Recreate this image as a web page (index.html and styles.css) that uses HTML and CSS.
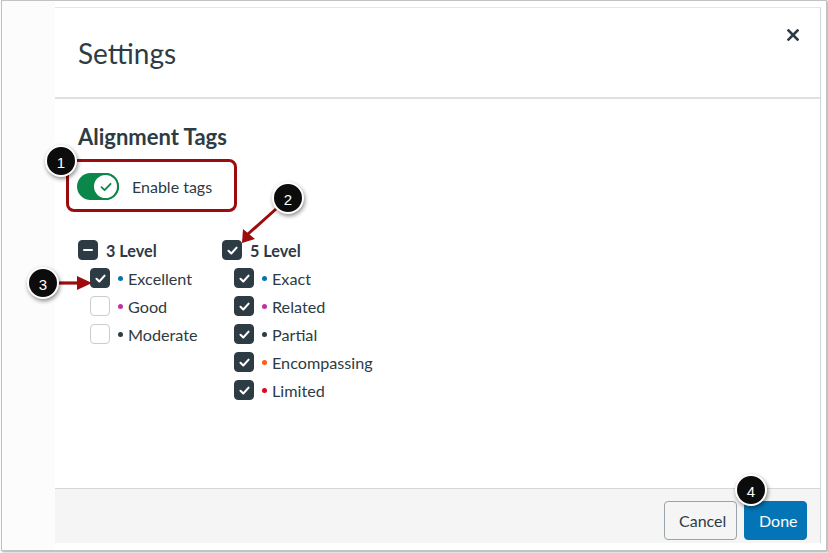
FILE: index.html
```html
<!DOCTYPE html>
<html lang="en">
<head>
<meta charset="utf-8">
<title>Settings</title>
<link rel="stylesheet" href="styles.css">
</head>
<body>
<div class="frame">
  <div class="strip"></div>
  <div class="modal">
    <header class="modal-header">
      <h1 class="title">Settings</h1>
      <button class="close" aria-label="Close">
        <svg width="12" height="12" viewBox="0 0 12 12"><path d="M1.5 1.5 L10.5 10.5 M10.5 1.5 L1.5 10.5" stroke="#2d3b45" stroke-width="2.6" stroke-linecap="square"/></svg>
      </button>
    </header>
    <section class="modal-body">
      <h2 class="section-title">Alignment Tags</h2>
      <div class="toggle-box">
        <span class="toggle">
          <span class="knob">
            <svg width="14" height="14" viewBox="0 0 14 14"><path d="M2.5 7.2 L5.6 10.2 L11.6 3.8" fill="none" stroke="#0b874b" stroke-width="1.8" stroke-linecap="round" stroke-linejoin="round"/></svg>
          </span>
        </span>
        <span class="toggle-label">Enable tags</span>
      </div>
      <div class="groups">
        <div class="group">
          <div class="row">
            <span class="cb on"><span class="minus"></span></span>
            <span class="group-label">3 Level</span>
          </div>
          <div class="children">
            <div class="row"><span class="cb on"><svg class="tick" viewBox="0 0 12 12"><path d="M2.3 6.3 L4.9 8.8 L9.8 3.4"/></svg></span><span class="dot blue"></span><span class="item">Excellent</span></div>
            <div class="row"><span class="cb"></span><span class="dot magenta"></span><span class="item">Good</span></div>
            <div class="row"><span class="cb"></span><span class="dot dark"></span><span class="item">Moderate</span></div>
          </div>
        </div>
        <div class="group">
          <div class="row">
            <span class="cb on"><svg class="tick" viewBox="0 0 12 12"><path d="M2.3 6.3 L4.9 8.8 L9.8 3.4"/></svg></span>
            <span class="group-label">5 Level</span>
          </div>
          <div class="children">
            <div class="row"><span class="cb on"><svg class="tick" viewBox="0 0 12 12"><path d="M2.3 6.3 L4.9 8.8 L9.8 3.4"/></svg></span><span class="dot blue"></span><span class="item">Exact</span></div>
            <div class="row"><span class="cb on"><svg class="tick" viewBox="0 0 12 12"><path d="M2.3 6.3 L4.9 8.8 L9.8 3.4"/></svg></span><span class="dot magenta"></span><span class="item">Related</span></div>
            <div class="row"><span class="cb on"><svg class="tick" viewBox="0 0 12 12"><path d="M2.3 6.3 L4.9 8.8 L9.8 3.4"/></svg></span><span class="dot dark"></span><span class="item">Partial</span></div>
            <div class="row"><span class="cb on"><svg class="tick" viewBox="0 0 12 12"><path d="M2.3 6.3 L4.9 8.8 L9.8 3.4"/></svg></span><span class="dot orange"></span><span class="item">Encompassing</span></div>
            <div class="row"><span class="cb on"><svg class="tick" viewBox="0 0 12 12"><path d="M2.3 6.3 L4.9 8.8 L9.8 3.4"/></svg></span><span class="dot red"></span><span class="item">Limited</span></div>
          </div>
        </div>
      </div>
    </section>
    <footer class="modal-footer">
      <button class="btn btn-secondary">Cancel</button>
      <button class="btn btn-primary">Done</button>
    </footer>
  </div>
</div>

<svg class="annotations" width="828" height="553" viewBox="0 0 828 553">
  <g class="arrow">
    <line x1="276" y1="209" x2="248" y2="234" stroke="#9c0c0c" stroke-width="3"/>
    <polygon points="242,243 243,229 255,239" fill="#9c0c0c"/>
    <line x1="55" y1="283" x2="80" y2="283" stroke="#9c0c0c" stroke-width="3.2"/>
    <polygon points="92,283 77,276 77,290" fill="#9c0c0c"/>
  </g>
  <g class="badge">
    <circle cx="61" cy="161" r="15"/>
    <text x="61" y="162">1</text>
  </g>
  <g class="badge">
    <circle cx="288" cy="198" r="15"/>
    <text x="288" y="199">2</text>
  </g>
  <g class="badge">
    <circle cx="43" cy="283" r="15"/>
    <text x="43" y="284">3</text>
  </g>
  <g class="badge">
    <circle cx="751" cy="490" r="15"/>
    <text x="751" y="491">4</text>
  </g>
</svg>
</body>
</html>
```

FILE: styles.css
```css
* { box-sizing: border-box; }

html, body {
  margin: 0;
  padding: 0;
  background: #ffffff;
  width: 828px;
  height: 553px;
  overflow: hidden;
  font-family: "Lato", "Liberation Sans", sans-serif;
  color: #2d3b45;
}

.frame {
  margin-left: 1px;
  width: 826px;
  height: 551px;
  border: 1px solid #c2c2c2;
  box-shadow: 1px 1px 2px rgba(0, 0, 0, 0.35);
  display: flex;
  padding-right: 5px;
  background: #ffffff;
}

.strip {
  width: 53px;
  flex: none;
  background: #fcfcfc;
}

.modal {
  margin-top: 6px;
  width: 766px;
  height: 536px;
  display: flex;
  flex-direction: column;
  background: #ffffff;
  border-top: 1px solid #e4e6e8;
  border-right: 1px solid #cfd4d7;
}

.modal-header {
  height: 91px;
  flex: none;
  display: flex;
  justify-content: space-between;
  align-items: center;
  padding: 0 21px 0 23px;
  border-bottom: 2px solid #dde1e3;
}

.title {
  margin: 0;
  font-size: 28px;
  font-weight: 400;
  line-height: 34px;
  color: #2d3b45;
}

.close {
  align-self: flex-start;
  margin-top: 21px;
  border: 0;
  padding: 0;
  background: none;
  width: 12px;
  height: 12px;
  display: flex;
}

.modal-body {
  flex: 1;
  padding: 24px 23px 0 23px;
}

.section-title {
  margin: 0;
  font-size: 22px;
  font-weight: 700;
  line-height: 28px;
  color: #2d3b45;
}

.toggle-box {
  margin-top: 8px;
  margin-left: -12px;
  width: 171px;
  height: 53px;
  border: 3px solid #9c0c0c;
  border-radius: 8px;
  display: flex;
  align-items: center;
  padding: 2px 0 0 8px;
}

.toggle {
  width: 42px;
  height: 27px;
  border-radius: 14px;
  background: #0b874b;
  display: flex;
  justify-content: flex-end;
  align-items: center;
}

.knob {
  width: 27px;
  height: 27px;
  border-radius: 50%;
  background: #ffffff;
  border: 2px solid #0b874b;
  display: flex;
  align-items: center;
  justify-content: center;
}

.toggle-label {
  margin-left: 13px;
  font-size: 16px;
  line-height: 20px;
}

.groups {
  margin-top: 24px;
  display: flex;
}

.group {
  width: 144px;
}

.group:last-child {
  width: auto;
}

.row {
  height: 28px;
  display: flex;
  align-items: center;
  font-size: 16.2px;
}

.children {
  padding-left: 12px;
}

.cb {
  width: 20px;
  height: 20px;
  border-radius: 4px;
  border: 1px solid #c7cdd1;
  background: #ffffff;
  display: flex;
  align-items: center;
  justify-content: center;
  flex: none;
}

.cb.on {
  background: #2d3b45;
  border-color: #2d3b45;
}

.minus {
  width: 10px;
  height: 2px;
  background: #ffffff;
  border-radius: 1px;
}

.tick {
  width: 13px;
  height: 13px;
}

.tick path {
  fill: none;
  stroke: #ffffff;
  stroke-width: 1.9;
  stroke-linecap: round;
  stroke-linejoin: round;
}

.group-label {
  margin-left: 8px;
  font-weight: 700;
}

.dot {
  width: 5px;
  height: 5px;
  border-radius: 50%;
  margin-left: 8px;
  flex: none;
}

.dot.blue { background: #0374b5; }
.dot.magenta { background: #bf32a4; }
.dot.dark { background: #2d3b45; }
.dot.orange { background: #fc5e13; }
.dot.red { background: #e0061f; }

.item {
  margin-left: 5px;
}

.modal-footer {
  height: 55px;
  flex: none;
  border-top: 1px solid #d3d8db;
  background: #f5f5f5;
  display: flex;
  justify-content: flex-end;
  align-items: flex-start;
  padding: 12px 13px 0 0;
  gap: 7px;
}

.btn {
  height: 39px;
  border-radius: 4px;
  font-family: "Lato", "Liberation Sans", sans-serif;
  font-size: 16px;
  padding: 0 14px;
  cursor: pointer;
}

.btn-secondary {
  background: #f5f5f5;
  border: 1px solid #9aa3a9;
  color: #2d3b45;
  width: 73px;
}

.btn-primary {
  background: #0374b5;
  border: 1px solid #0374b5;
  color: #ffffff;
  width: 63px;
}

.annotations {
  position: absolute;
  left: 0;
  top: 0;
  pointer-events: none;
}

.badge circle {
  fill: #0c0c0c;
  stroke: #ffffff;
  stroke-width: 2;
  filter: drop-shadow(1px 2px 2px rgba(0, 0, 0, 0.45));
}

.badge text {
  fill: #ffffff;
  font-family: "Liberation Sans", "Arial", sans-serif;
  font-size: 15px;
  text-anchor: middle;
  dominant-baseline: central;
}
```
